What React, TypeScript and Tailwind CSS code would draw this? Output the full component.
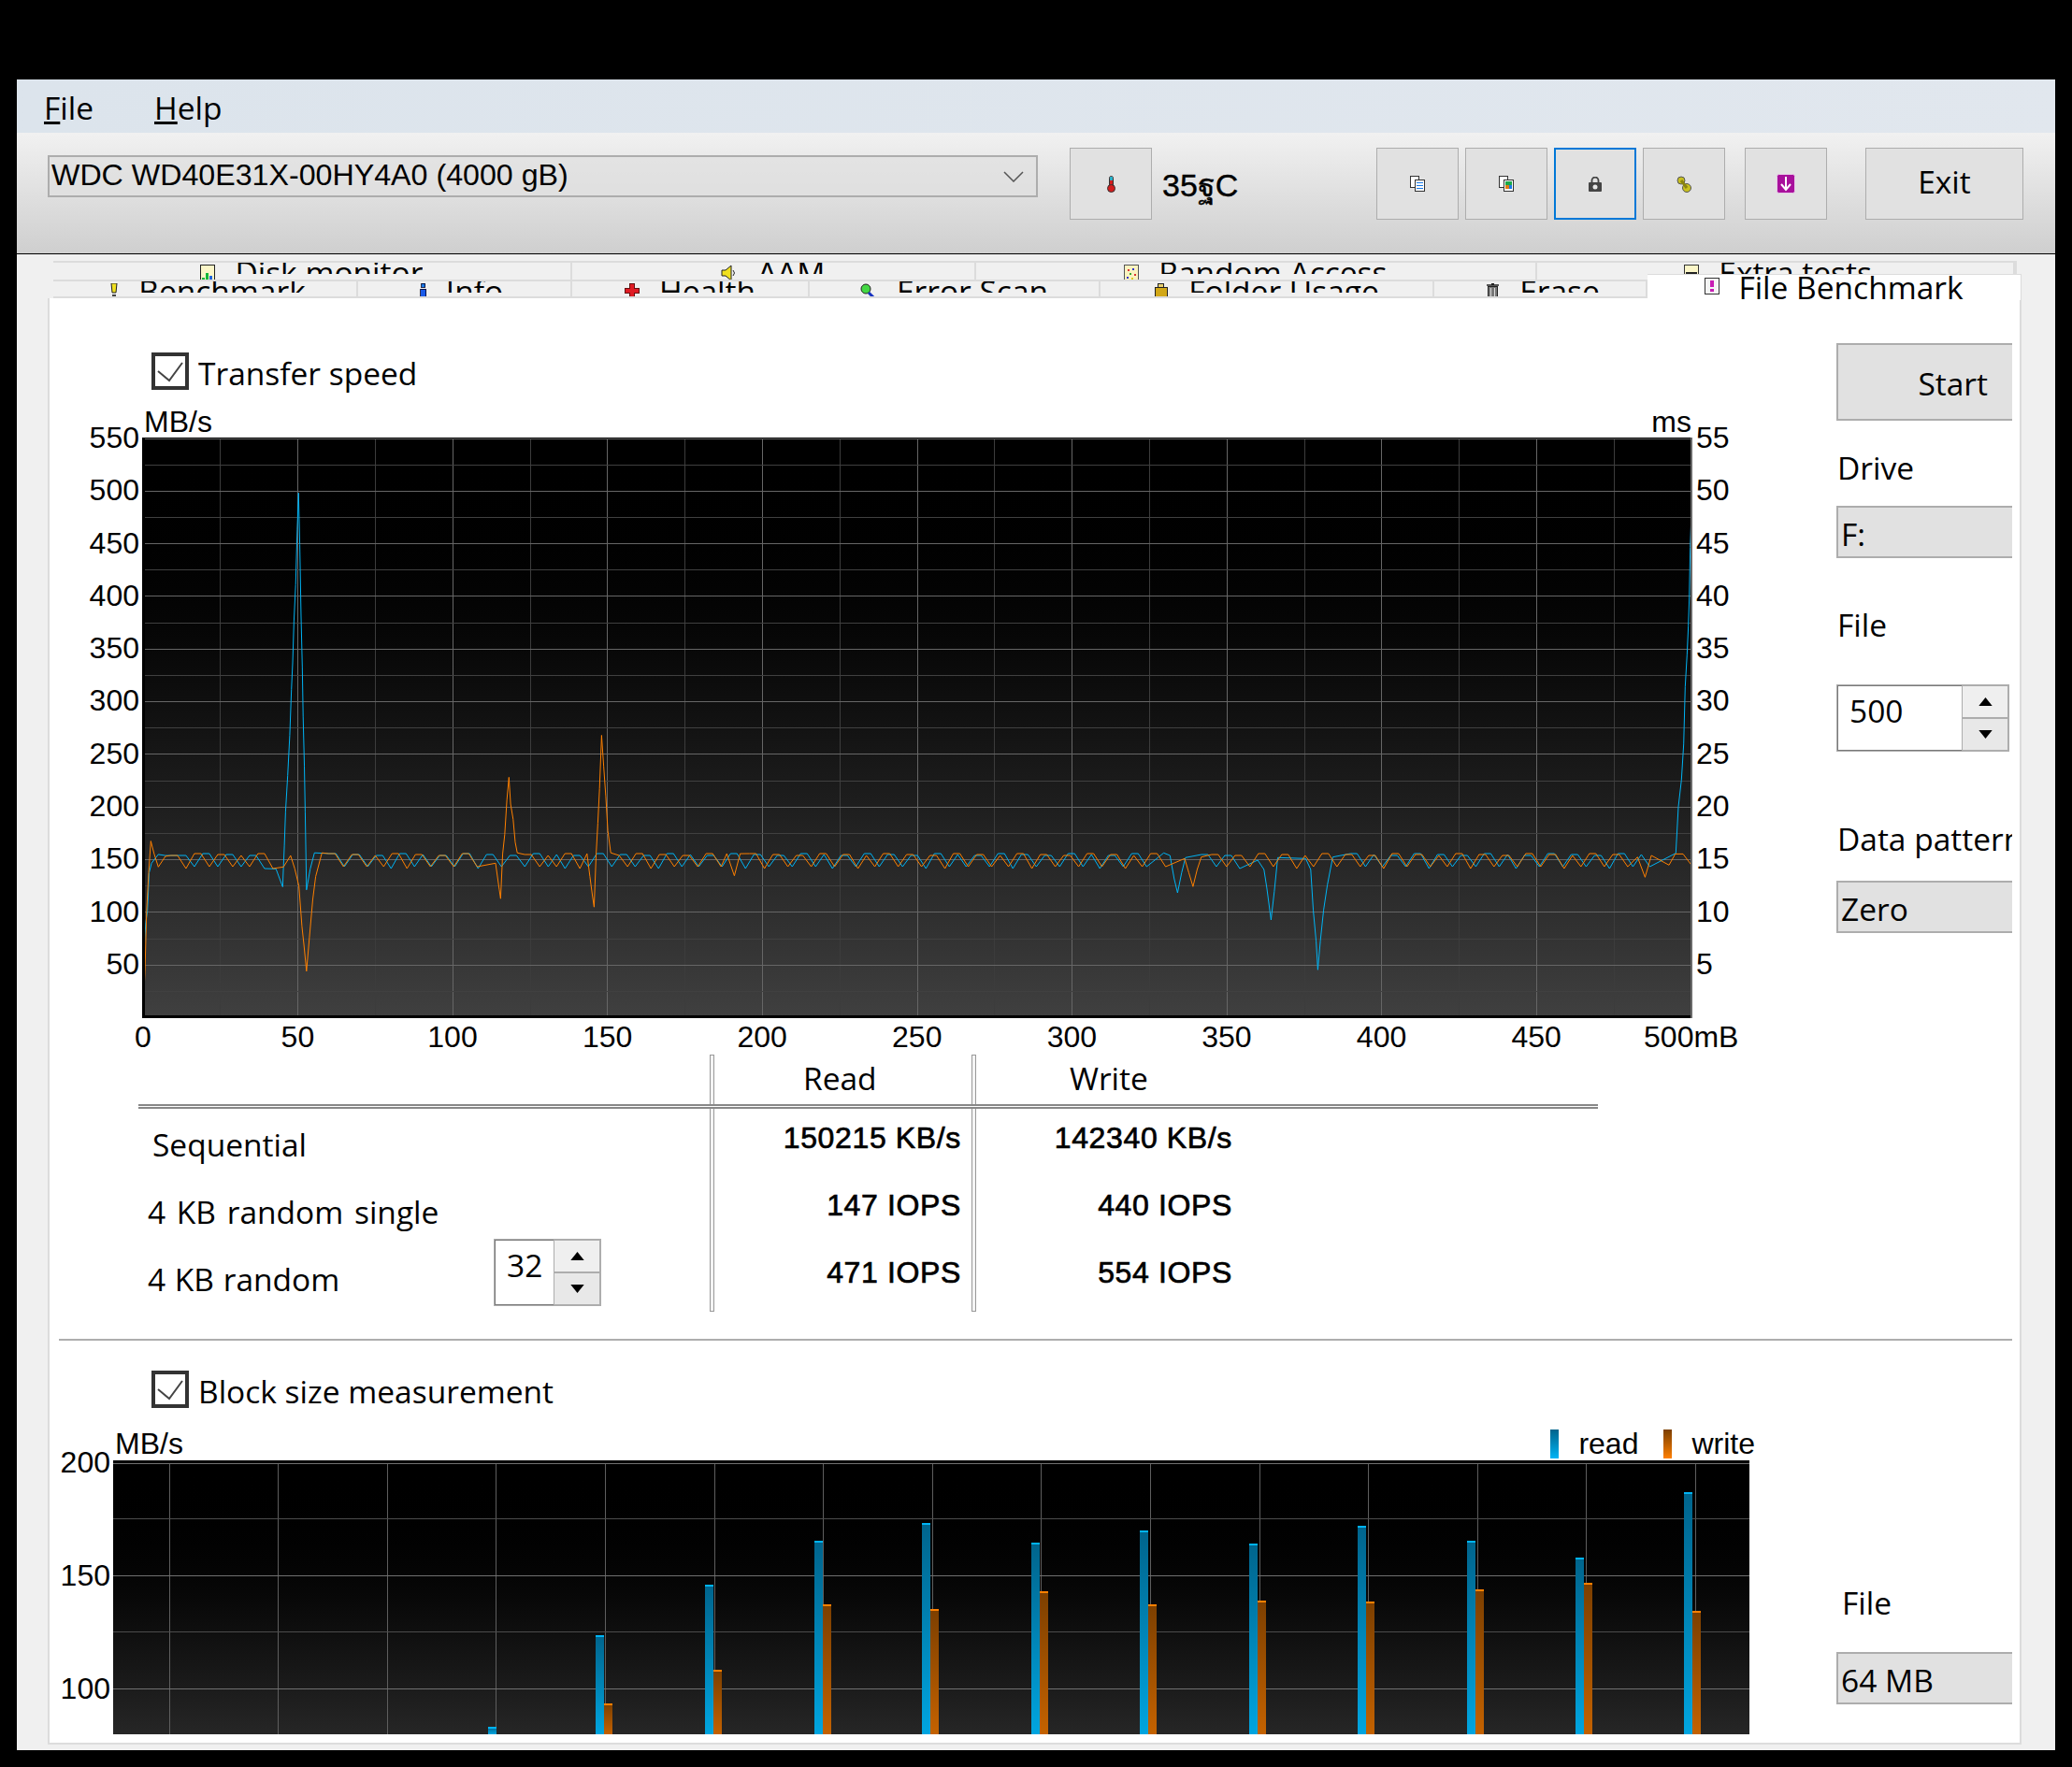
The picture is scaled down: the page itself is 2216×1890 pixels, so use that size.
import React from 'react';

const ui = "font-['Open_Sans',sans-serif] text-[33.5px] leading-[40px] text-black whitespace-nowrap";
const arial = "font-['Liberation_Sans',sans-serif] text-[32px] leading-[36px] text-black whitespace-nowrap";
const value = "font-['Liberation_Sans',sans-serif] text-[32px] leading-[36px] tracking-[0.02em] text-black whitespace-nowrap [-webkit-text-stroke:0.7px_black]";

type Pt = [number, number];

// chart 1 lives at page coords x 152.., y 468..
const z3 = (pts: Pt[]): Pt[] => pts.map(([x, y]) => [130 + x / 2.24, 460 + y / 2.45]);
const z4 = (pts: Pt[]): Pt[] => pts.map(([x, y]) => [1200 + x / 2.24, 840 + y / 3]);
const z8 = (pts: Pt[]): Pt[] => pts.map(([x, y]) => [1740 + x / 3, 440 + y / 2.613]);

const readEvents: Pt[][] = [
  z3([[52, 1400], [58, 1290], [62, 1260], [66, 1160], [72, 1135], [88, 1112], [105, 1115]]),
  z3([[370, 1150], [386, 1197], [390, 1090], [393, 1000], [398, 905], [403, 800], [407, 680], [410, 610], [413, 500], [417, 405], [421, 260], [424, 165], [427, 300], [430, 490], [433, 620], [435, 750], [438, 880], [440, 1000], [443, 1205], [452, 1150], [462, 1108]]),
  z4([[100, 217], [115, 225], [125, 300], [133, 345], [143, 280], [152, 232]]),
  z4([[325, 240], [340, 270], [347, 330], [357, 432], [365, 340], [373, 232]]),
  z4([[440, 235], [452, 270], [458, 400], [465, 500], [469, 592], [475, 500], [483, 400], [492, 320], [505, 230]]),
  z8([[157, 1235], [165, 1105], [175, 1030], [182, 930], [187, 770], [193, 680], [197, 600], [200, 520], [203, 380], [207, 280], [210, 230]]),
];

const writeEvents: Pt[][] = [
  z3([[52, 1510], [56, 1420], [60, 1260], [65, 1160], [70, 1077], [78, 1110], [88, 1145], [105, 1117]]),
  z3([[388, 1145], [405, 1115], [415, 1150], [425, 1195], [432, 1300], [437, 1350], [443, 1418], [450, 1330], [458, 1230], [465, 1170], [480, 1108]]),
  z3([[896, 1135], [905, 1205], [908, 1228], [913, 1110], [918, 1060], [923, 970], [928, 910], [932, 980], [938, 1020], [943, 1080], [948, 1108]]),
  z3([[1115, 1110], [1122, 1170], [1128, 1220], [1132, 1250], [1137, 1110], [1141, 1030], [1145, 940], [1150, 800], [1155, 880], [1160, 960], [1165, 1050], [1172, 1108]]),
  z3([[1450, 1110], [1468, 1168], [1482, 1110]]),
  z4([[150, 235], [160, 280], [170, 325], [180, 270], [190, 230]]),
  z4([[1235, 230], [1253, 295], [1268, 225]]),
  z8([[135, 1268], [155, 1237], [180, 1237], [207, 1268]]),
];

function zigzag(x0: number, x1: number, periods: number[], phase: number): Pt[] {
  const out: Pt[] = [];
  let x = x0 + phase;
  let i = phase;
  while (x + 18 < x1) {
    const p = periods[i % periods.length];
    const top = 913 + (i % 3);
    const low = 927 + (i % 4 === 2 ? 2 : 0);
    out.push([x, top], [x + p - 18, top], [x + p - 9, low]);
    x += p;
    i++;
  }
  return out;
}

function buildLine(events: Pt[][], periods: number[], phase: number) {
  const pts: Pt[] = [];
  events.forEach((ev, i) => {
    pts.push(...ev);
    const next = events[i + 1];
    if (next) pts.push(...zigzag(ev[ev.length - 1][0] + 4, next[0][0] - 4, periods, phase + i));
  });
  return pts.map(([x, y]) => `${(x - 152).toFixed(1)},${(y - 468).toFixed(1)}`).join(' ');
}

const readLine = buildLine(readEvents, [25, 25, 25, 25, 18, 25], 11);
const writeLine = buildLine(writeEvents, [25, 25, 25, 25, 25, 18], 2);

const xTicks = Array.from({ length: 21 }, (_, i) => i * 25);
const transferY = [550, 500, 450, 400, 350, 300, 250, 200, 150, 100, 50];
const msY = [55, 50, 45, 40, 35, 30, 25, 20, 15, 10, 5];
const transferX = ['0', '50', '100', '150', '200', '250', '300', '350', '400', '450', '500mB'];

function TransferChart() {
  return (
    <svg className="block w-[1658px] h-[621px] shrink-0 bg-linear-to-b from-black to-[#404040]" viewBox="0 0 1658 621" shapeRendering="crispEdges">
      {xTicks.map((m) => {
        const x = 1 + m * 3.312;
        return <line key={m} x1={x} x2={x} y1={0} y2={621} stroke={m % 50 === 0 ? '#666' : '#3c3c3c'} strokeWidth={1} />;
      })}
      {Array.from({ length: 22 }, (_, i) => {
        const y = 1 + i * 28.16;
        return <line key={i} x1={0} x2={1658} y1={y} y2={y} stroke={i % 2 === 1 ? '#404040' : '#666'} strokeWidth={1} />;
      })}
      <g shapeRendering="auto" fill="none" strokeWidth={1}>
        <polyline points={readLine} stroke="#00b4f5" />
        <polyline points={writeLine} stroke="#ff8000" />
      </g>
      <rect x={0} y={0} width={3} height={621} fill="#000" />
      <rect x={0} y={0} width={1658} height={1} fill="#000" />
      <rect x={0} y={618} width={1658} height={3} fill="#000" />
      <rect x={1656} y={0} width={2} height={621} fill="#6a6a6a" />
    </svg>
  );
}

// [grid x, read top, write top] in page px
const bars: [number, number, number | null][] = [
  [531, 1848, null], [646, 1750, 1823], [763, 1696, 1787], [880, 1649, 1717], [995, 1630, 1722],
  [1112, 1651, 1703], [1228, 1638, 1717], [1345, 1652, 1713], [1461, 1633, 1714], [1578, 1649, 1701],
  [1694, 1667, 1694], [1810, 1597, 1724],
];

function BlockChart() {
  const bottom = 293;
  return (
    <svg className="block w-[1750px] h-[293px] shrink-0 bg-linear-to-b from-black to-[#262626]" viewBox="0 0 1750 293" shapeRendering="crispEdges">
      <defs>
        <linearGradient id="rd" x1="0" y1="0" x2="0" y2="1">
          <stop offset="0" stopColor="#00648c" />
          <stop offset="1" stopColor="#00a5e0" />
        </linearGradient>
        <linearGradient id="wr" x1="0" y1="0" x2="0" y2="1">
          <stop offset="0" stopColor="#7c3f00" />
          <stop offset="1" stopColor="#c46200" />
        </linearGradient>
      </defs>
      {Array.from({ length: 15 }, (_, k) => {
        const x = 181 + k * 116.6 - 121;
        return <line key={k} x1={x} x2={x} y1={0} y2={293} stroke="#5e5e5e" />;
      })}
      {[3, 62, 123, 183, 244].map((y, i) => (
        <line key={y} x1={0} x2={1750} y1={y} y2={y} stroke={i % 2 === 0 ? '#707070' : '#4c4c4c'} />
      ))}
      <rect x={0} y={0} width={1750} height={3} fill="#000" />
      {bars.map(([gx, rt, wt]) => {
        const x = gx - 121;
        const ry = rt - 1563;
        return (
          <g key={gx}>
            <rect x={x - 9} y={ry} width={9} height={bottom - ry} fill="url(#rd)" />
            <rect x={x - 9} y={ry} width={9} height={2} fill="#00b4f5" />
            {wt !== null && (
              <>
                <rect x={x} y={wt - 1563} width={9} height={bottom - (wt - 1563)} fill="url(#wr)" />
                <rect x={x} y={wt - 1563} width={9} height={2} fill="#ff8000" />
              </>
            )}
          </g>
        );
      })}
    </svg>
  );
}

function Check({ label }: { label: string }) {
  return (
    <div className="flex items-center gap-[10px] h-[40px] ml-[109px]">
      <div className="w-[40px] h-[40px] border-[4px] border-[#333] bg-white shrink-0">
        <svg viewBox="0 0 32 32" className="w-[32px] h-[32px]">
          <path d="M3 16 L15 26 L29 7" fill="none" stroke="#444" strokeWidth="2" />
        </svg>
      </div>
      <span className={`${ui} pt-[4px]`}>{label}</span>
    </div>
  );
}

function Spin({ value, w, inputW }: { value: string; w: string; inputW: string }) {
  return (
    <div className={`${w} flex bg-white border border-[#adadad]`}>
      <div className={`${inputW} border-y border-l border-[#7a7a7a] flex pt-[6px] pl-[12px] ${ui}`}>{value}</div>
      <div className="flex-1 flex flex-col border border-[#adadad]">
        <div className="flex-1 bg-[#efefef] border-b-2 border-[#adadad] flex items-center justify-center">
          <svg viewBox="0 0 16 10" className="w-[15px] h-[9px]"><path d="M8 0 L16 10 H0 Z" fill="#000" /></svg>
        </div>
        <div className="flex-1 bg-[#e8e8e8] flex items-center justify-center">
          <svg viewBox="0 0 16 10" className="w-[15px] h-[9px]"><path d="M0 0 H16 L8 10 Z" fill="#000" /></svg>
        </div>
      </div>
    </div>
  );
}

const Ic = ({ w, h, vw, vh, children }: { w: number; h: number; vw: number; vh: number; children: React.ReactNode }) => (
  <svg width={w} height={h} viewBox={`0 0 ${vw} ${vh}`} className="shrink-0 block" shapeRendering="crispEdges">{children}</svg>
);

const DiskIcon = () => (
  <Ic w={16} h={20} vw={16} vh={20}>
    <rect x="0.5" y="0.5" width="15" height="19" fill="#fbf6c8" stroke="#222" />
    <rect x="2" y="14" width="3" height="5" fill="#12b83a" />
    <rect x="6" y="9" width="3" height="10" fill="#12b83a" />
    <rect x="10" y="12" width="3" height="7" fill="#2266dd" />
  </Ic>
);
const SpeakerIcon = () => (
  <Ic w={18} h={18} vw={18} vh={18}>
    <path d="M1 6 H5 L11 1 V17 L5 12 H1 Z" fill="#f0e020" stroke="#222" shapeRendering="auto" />
    <path d="M13 6 Q16 9 13 12" fill="none" stroke="#222" shapeRendering="auto" />
  </Ic>
);
const RandomIcon = () => (
  <Ic w={16} h={20} vw={16} vh={20}>
    <rect x="0.5" y="0.5" width="15" height="19" fill="#fbf3c0" stroke="#555" />
    <rect x="4" y="5" width="2" height="2" fill="#d33" /><rect x="9" y="4" width="2" height="2" fill="#33c" />
    <rect x="6" y="9" width="2" height="2" fill="#3a3" /><rect x="11" y="10" width="2" height="2" fill="#d33" />
    <rect x="3" y="13" width="2" height="2" fill="#33c" /><rect x="8" y="14" width="2" height="2" fill="#dc2" />
  </Ic>
);
const ExtraIcon = () => (
  <Ic w={16} h={20} vw={16} vh={20}>
    <rect x="0.5" y="0.5" width="15" height="19" fill="#fbf6c8" stroke="#333" />
    <rect x="2" y="8" width="12" height="2" fill="#222" />
    <rect x="4" y="13" width="10" height="6" fill="#7799ee" />
    <rect x="1" y="13" width="2" height="6" fill="#12b83a" />
  </Ic>
);
const BangIcon = () => (
  <Ic w={10} h={16} vw={10} vh={16}>
    <path d="M2 0 H8 L7 10 H3 Z" fill="#f0e020" stroke="#222" shapeRendering="auto" />
    <rect x="3" y="12" width="4" height="4" fill="#444" />
  </Ic>
);
const InfoIcon = () => (
  <Ic w={7} h={16} vw={7} vh={16}>
    <rect x="1.5" y="0" width="4" height="4" fill="#1a7ae8" stroke="#002" strokeWidth="0.8" />
    <rect x="0.5" y="6" width="6" height="10" fill="#1a5ae8" stroke="#002" strokeWidth="0.8" />
  </Ic>
);
const HealthIcon = () => (
  <Ic w={16} h={16} vw={16} vh={16}>
    <path d="M5.5 0.5 H10.5 V5.5 H15.5 V10.5 H10.5 V15.5 H5.5 V10.5 H0.5 V5.5 H5.5 Z" fill="#e01c24" stroke="#611" />
  </Ic>
);
const ScanIcon = () => (
  <Ic w={18} h={16} vw={18} vh={16}>
    <circle cx="6" cy="6" r="5" fill="#44d844" stroke="#222" shapeRendering="auto" />
    <path d="M9 10 L15 16" stroke="#1530c0" strokeWidth="3" shapeRendering="auto" />
  </Ic>
);
const FolderIcon = () => (
  <Ic w={16} h={17} vw={16} vh={17}>
    <rect x="1.5" y="4.5" width="13" height="12" fill="#d2a818" stroke="#222" />
    <rect x="4" y="0.5" width="6" height="4" fill="#e8d070" stroke="#222" />
  </Ic>
);
const EraseIcon = () => (
  <Ic w={15} h={16} vw={15} vh={16}>
    <rect x="1" y="1" width="13" height="2" fill="#555" />
    <rect x="6" y="0" width="3" height="2" fill="#222" />
    <rect x="2.5" y="3.5" width="10" height="12" fill="#777" stroke="#222" />
    <rect x="5" y="5" width="1" height="9" fill="#ddd" /><rect x="9" y="5" width="1" height="9" fill="#ddd" />
  </Ic>
);
const FileBenchIcon = () => (
  <Ic w={16} h={18} vw={16} vh={18}>
    <rect x="0.5" y="0.5" width="15" height="17" fill="#f4f4f4" stroke="#333" />
    <rect x="6" y="3" width="4" height="7" fill="#c81eb4" />
    <rect x="6" y="12" width="4" height="3" fill="#c81eb4" />
  </Ic>
);

function Tab({ w, icon, label, extra = '' }: { w: string; icon: React.ReactNode; label: string; extra?: string }) {
  return (
    <div className={`${w} h-full border-r-2 border-[#dcdcdc] flex justify-center items-start gap-[21px] overflow-hidden ${extra}`}>
      <div className="pt-[2px]">{icon}</div>
      <div className="h-[12px] overflow-hidden">
        <div className={`${ui} -mt-[10px]`}>{label}</div>
      </div>
    </div>
  );
}

function ToolButton({ active, children, w = 'w-[88px]' }: { active?: boolean; children: React.ReactNode; w?: string }) {
  return (
    <div className={`${w} h-[77px] shrink-0 flex items-center justify-center bg-[#e1e1e1] ${active ? 'border-[2px] border-[#0078d7]' : 'border border-[#adadad]'}`}>
      {children}
    </div>
  );
}

function ReadOnlyBox({ text }: { text: string }) {
  return (
    <div className={`w-[188px] h-[56px] bg-[#e1e1e1] border-y-2 border-l-2 border-[#adadad] pl-[3px] pt-[8px] ${ui}`}>{text}</div>
  );
}

export default function App() {
  return (
    <div className="w-[2216px] h-[1890px] bg-black overflow-hidden pt-[85px] pl-[18px]">
      <div className="w-[2180px] h-[1787px] bg-[#f0f0f0] flex flex-col">
        {/* menu */}
        <div className="h-[57px] bg-linear-to-r from-[#dce4ec] to-[#e1e7ee] flex items-center pl-[29px] pt-[2px] gap-[65px] shrink-0">
          <span className={ui}><u>F</u>ile</span>
          <span className={ui}><u>H</u>elp</span>
        </div>

        {/* toolbar */}
        <div className="h-[130px] shrink-0 bg-linear-to-b from-[#f1f1f1] to-[#cfcfcf] border-b border-black flex items-start pt-[16px] pl-[33px]">
          <div className="w-[1059px] h-[45px] mt-[8px] bg-[#e0e0e0]/70 border-2 border-[#adadad] flex items-center justify-between pl-[2px] pr-[13px] shrink-0">
            <span className="font-['Liberation_Sans',sans-serif] text-[32.2px] text-black whitespace-nowrap -mt-[2px]">WDC WD40E31X-00HY4A0 (4000 gB)</span>
            <svg viewBox="0 0 22 12" className="w-[22px] h-[12px]"><path d="M1 1 L11 11 L21 1" fill="none" stroke="#555" strokeWidth="1.5" /></svg>
          </div>
          <div className="ml-[34px]">
            <ToolButton>
              <svg width="11" height="18" viewBox="0 0 11 18">
                <rect x="3.5" y="0.5" width="4" height="12" rx="2" fill="#d41c1c" stroke="#333" />
                <rect x="4" y="1" width="3" height="4" fill="#2ab0c8" />
                <circle cx="5.5" cy="13.5" r="4" fill="#d41c1c" stroke="#333" />
              </svg>
            </ToolButton>
          </div>
          <div className="ml-[11px] w-[229px] mt-[20px] font-['Liberation_Sans','Noto_Sans',sans-serif] text-[34px] text-black leading-[40px] [-webkit-text-stroke:0.4px_black]">35ฐC</div>
          <div className="flex gap-[7px]">
            <ToolButton>
              <svg width="16" height="17" viewBox="0 0 16 17" shapeRendering="crispEdges">
                <rect x="0.5" y="0.5" width="9" height="12" fill="#fff" stroke="#333" />
                <rect x="5.5" y="4.5" width="10" height="12" fill="#fff" stroke="#333" />
                <rect x="7" y="7" width="7" height="1" fill="#1a7ae8" /><rect x="7" y="10" width="7" height="1" fill="#1a7ae8" /><rect x="7" y="13" width="7" height="1" fill="#1a7ae8" />
              </svg>
            </ToolButton>
            <ToolButton>
              <svg width="16" height="17" viewBox="0 0 16 17" shapeRendering="crispEdges">
                <rect x="0.5" y="0.5" width="9" height="12" fill="#fff" stroke="#333" />
                <rect x="5.5" y="4.5" width="10" height="12" fill="#fff" stroke="#333" />
                <rect x="7" y="6" width="7" height="4" fill="#1aa84a" /><rect x="7" y="10" width="4" height="4" fill="#e07a10" /><rect x="11" y="10" width="3" height="4" fill="#1a7ae8" />
              </svg>
            </ToolButton>
            <ToolButton active>
              <svg width="16" height="16" viewBox="0 0 16 16">
                <path d="M4.5 6 V4 A3.5 3.5 0 0 1 11.5 4 V6" fill="none" stroke="#444" strokeWidth="1.8" />
                <rect x="1" y="6" width="14" height="10" rx="1" fill="#444" />
                <circle cx="8" cy="11" r="2.5" fill="#e8e8e8" />
              </svg>
            </ToolButton>
            <ToolButton>
              <svg width="16" height="20" viewBox="0 0 16 20">
                <circle cx="5" cy="6" r="4" fill="#c8c020" stroke="#555" />
                <circle cx="11" cy="14" r="4.5" fill="#c8c020" stroke="#555" />
                <path d="M5 6 L11 14" stroke="#8a8410" strokeWidth="3" />
              </svg>
            </ToolButton>
          </div>
          <div className="ml-[21px]">
            <ToolButton>
              <svg width="20" height="21" viewBox="0 0 20 21">
                <rect x="0.5" y="0.5" width="19" height="20" rx="2" fill="#a8109c" stroke="#e8c8e8" />
                <path d="M10 3 V16 M5 11 L10 17 L15 11" fill="none" stroke="#fff" strokeWidth="2" />
              </svg>
            </ToolButton>
          </div>
          <div className="ml-[41px]">
            <ToolButton w="w-[169px]"><span className={`${ui} -mt-[5px]`}>Exit</span></ToolButton>
          </div>
        </div>

        {/* tabs */}
        <div className="relative h-[47px] shrink-0 pt-[7px] pl-[39px]">
          <div className="flex h-[20px] w-[2100px] border-t-2 border-r-2 border-[#dcdcdc]">
            <Tab w="w-[555px]" icon={<DiskIcon />} label="Disk monitor" />
            <Tab w="w-[432px]" icon={<SpeakerIcon />} label="AAM" />
            <Tab w="w-[601px]" icon={<RandomIcon />} label="Random Access" />
            <Tab w="w-[511px]" icon={<ExtraIcon />} label="Extra tests" extra="pl-[6px]" />
          </div>
          <div className="flex h-[20px] border-y-2 border-[#dcdcdc] w-[1705px]">
            <Tab w="w-[326px]" icon={<BangIcon />} label="Benchmark" extra="pl-[6px]" />
            <Tab w="w-[229px]" icon={<InfoIcon />} label="Info" extra="pr-[6px]" />
            <Tab w="w-[254px]" icon={<HealthIcon />} label="Health" />
            <Tab w="w-[311px]" icon={<ScanIcon />} label="Error Scan" />
            <Tab w="w-[357px]" icon={<FolderIcon />} label="Folder Usage" />
            <Tab w="w-[228px]" icon={<EraseIcon />} label="Erase" extra="pl-[6px]" />
          </div>
          <div className="absolute left-[1744px] top-[21px] w-[400px] h-[28px] bg-white border-t border-r border-[#dcdcdc] flex justify-center items-start gap-[20px] overflow-hidden">
            <div className="pt-[3px]"><FileBenchIcon /></div>
            <div className={`${ui} -mt-[7px]`}>File Benchmark</div>
          </div>
        </div>

        {/* panel */}
        <div className="ml-[33px] w-[2111px] h-[1547px] bg-white border-x-2 border-b-2 border-[#dcdcdc] flex flex-col shrink-0 overflow-hidden">
          <div className="h-[1113px] flex shrink-0">
            <div className="w-[1911px] shrink-0 pt-[58px]">
              <Check label="Transfer speed" />
              <div className="h-[51px] ml-[101px] w-[1655px] flex justify-between items-end translate-y-[1px]">
                <span className={arial}>MB/s</span>
                <span className={arial}>ms</span>
              </div>
              <div className="flex">
                <div className="w-[99px] shrink-0 -mt-[28px] flex flex-col items-end pr-[3px] h-[621px]">
                  {transferY.map((v) => (
                    <div key={v} className={`h-[56.28px] shrink-0 flex items-center ${arial}`}>{v}</div>
                  ))}
                </div>
                <TransferChart />
                <div className="pl-[4px] -mt-[28px] flex flex-col h-[621px]">
                  {msY.map((v) => (
                    <div key={v} className={`h-[56.28px] shrink-0 flex items-center ${arial}`}>{v}</div>
                  ))}
                </div>
              </div>
              <div className="h-[39px] flex ml-[17px]">
                {transferX.map((t) => (
                  <div key={t} className={`w-[165.6px] shrink-0 text-center pt-[2px] ${arial}`}>{t}</div>
                ))}
              </div>

              {/* results table */}
              <div className="relative flex h-[275px]">
                <div className="absolute left-[95px] top-[53px] w-[1561px] h-[5px] border-y-2 border-[#888] bg-white" />
                <div className="w-[706px] shrink-0 pt-[60px]">
                  <div className={`h-[72px] flex items-center ml-[110px] ${ui}`}>Sequential</div>
                  <div className={`h-[72px] flex items-center ml-[105px] [word-spacing:3px] ${ui}`}>4 KB random single</div>
                  <div className="h-[72px] flex items-start ml-[105px]">
                    <div className={`w-[370px] h-[72px] flex items-center [word-spacing:1px] ${ui}`}>4 KB random</div>
                    <div className="-mt-[7px] h-[72px]">
                      <Spin value="32" w="w-[115px] h-[72px]" inputW="w-[63px]" />
                    </div>
                  </div>
                </div>
                <div className="w-[5px] h-full shrink-0 border border-[#999] bg-[#f4f4f4]" />
                <div className="w-[275px] shrink-0">
                  <div className={`h-[53px] flex items-center pl-[95px] pb-[3px] ${ui}`}>Read</div>
                  <div className={`h-[72px] flex items-center justify-end pr-[11px] ${value}`}>150215 KB/s</div>
                  <div className={`h-[72px] flex items-center justify-end pr-[11px] ${value}`}>147 IOPS</div>
                  <div className={`h-[72px] flex items-center justify-end pr-[11px] ${value}`}>471 IOPS</div>
                </div>
                <div className="w-[5px] h-full shrink-0 border border-[#999] bg-[#f4f4f4]" />
                <div className="w-[274px] shrink-0">
                  <div className={`h-[53px] flex items-center pl-[100px] pb-[3px] ${ui}`}>Write</div>
                  <div className={`h-[72px] flex items-center justify-end ${value}`}>142340 KB/s</div>
                  <div className={`h-[72px] flex items-center justify-end ${value}`}>440 IOPS</div>
                  <div className={`h-[72px] flex items-center justify-end ${value}`}>554 IOPS</div>
                </div>
              </div>
            </div>

            {/* right column, top */}
            <div className="w-[188px] shrink-0 overflow-hidden pt-[48px]">
              <div className={`w-[188px] h-[83px] bg-[#e1e1e1] border-y-2 border-l-2 border-[#adadad] flex items-center justify-end pr-[26px] pt-[3px] ${ui}`}>Start</div>
              <div className={`${ui} mt-[30px] pl-[1px] h-[41px]`}>Drive</div>
              <div className="mt-[20px]"><ReadOnlyBox text="F:" /></div>
              <div className={`${ui} mt-[51px] pl-[1px] h-[41px]`}>File</div>
              <div className="mt-[43px]">
                <Spin value="500" w="w-[185px] h-[72px]" inputW="w-[133px]" />
              </div>
              <div className={`${ui} mt-[73px] pl-[1px] h-[41px]`}>Data pattern</div>
              <div className="mt-[24px]"><ReadOnlyBox text="Zero" /></div>
            </div>
          </div>

          <div className="h-[2px] ml-[10px] mr-[8px] bg-[#adadad] shrink-0" />

          <div className="flex flex-1 min-h-0">
            <div className="w-[1911px] shrink-0 pt-[32px]">
              <Check label="Block size measurement" />
              <div className="h-[56px] ml-[70px] w-[1754px] flex justify-between items-end">
                <span className={arial}>MB/s</span>
                <div className="flex items-end">
                  <div className="w-[9px] h-[31px] bg-linear-to-b from-[#00648c] to-[#00b4f5] mb-[2px] mr-[21px]" />
                  <span className={`${arial} mr-[27px]`}>read</span>
                  <div className="w-[9px] h-[31px] bg-linear-to-b from-[#7c3f00] to-[#ff8000] mb-[2px] mr-[21px]" />
                  <span className={arial}>write</span>
                </div>
              </div>
              <div className="flex">
                <div className="w-[68px] shrink-0 -mt-[59px] flex flex-col items-end pr-[3px] h-[293px]">
                  {[200, 150, 100].map((v) => (
                    <div key={v} className={`h-[121px] shrink-0 flex items-center ${arial}`}>{v}</div>
                  ))}
                </div>
                <BlockChart />
              </div>
            </div>
            <div className="w-[188px] shrink-0 overflow-hidden pt-[260px]">
              <div className={`${ui} pl-[6px] h-[41px]`}>File</div>
              <div className="mt-[32px]"><ReadOnlyBox text="64 MB" /></div>
            </div>
          </div>
        </div>
      </div>
    </div>
  );
}
